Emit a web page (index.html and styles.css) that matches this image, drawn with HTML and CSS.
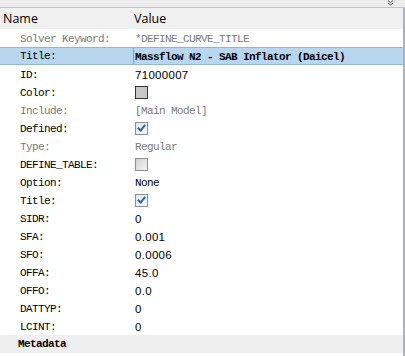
FILE: index.html
```html
<!DOCTYPE html>
<html lang="en">
<head>
    <meta charset="UTF-8">
    <title>Properties</title>
    <link rel="stylesheet" href="styles.css">
</head>
<body>
    <div class="panel">
        <div class="topbar">
            <svg class="collapse" width="7" height="6" viewBox="0 0 7 6">
                <path d="M1 0.5 L3.5 2.5 L6 0.5 M1 3 L3.5 5 L6 3" fill="none" stroke="#555" stroke-width="1"/>
            </svg>
        </div>
        <div class="grid">
            <div class="header">
                <div class="col-name">Name</div>
                <div class="col-value">Value</div>
            </div>
            <div class="row muted"><div class="name">Solver Keyword:</div><div class="value">*DEFINE_CURVE_TITLE</div></div>
            <div class="row selected"><div class="name">Title:</div><div class="value">Massflow N2 - SAB Inflator (Daicel)</div></div>
            <div class="row"><div class="name">ID:</div><div class="value num">71000007</div></div>
            <div class="row"><div class="name">Color:</div><div class="value"><span class="swatch"></span></div></div>
            <div class="row muted"><div class="name">Include:</div><div class="value">[Main Model]</div></div>
            <div class="row"><div class="name">Defined:</div><div class="value"><span class="check on"></span></div></div>
            <div class="row muted"><div class="name">Type:</div><div class="value">Regular</div></div>
            <div class="row"><div class="name">DEFINE_TABLE:</div><div class="value"><span class="check"></span></div></div>
            <div class="row"><div class="name">Option:</div><div class="value">None</div></div>
            <div class="row"><div class="name">Title:</div><div class="value"><span class="check on"></span></div></div>
            <div class="row"><div class="name">SIDR:</div><div class="value num">0</div></div>
            <div class="row"><div class="name">SFA:</div><div class="value num">0.001</div></div>
            <div class="row"><div class="name">SFO:</div><div class="value num">0.0006</div></div>
            <div class="row"><div class="name">OFFA:</div><div class="value num">45.0</div></div>
            <div class="row"><div class="name">OFFO:</div><div class="value num">0.0</div></div>
            <div class="row"><div class="name">DATTYP:</div><div class="value num">0</div></div>
            <div class="row"><div class="name">LCINT:</div><div class="value num">0</div></div>
            <div class="group">Metadata</div>
        </div>
    </div>
</body>
</html>
```

FILE: styles.css
```css
body {
    margin: 0;
    background: #f7f7f7;
    font-family: "Liberation Mono", monospace;
    font-size: 11px;
    letter-spacing: -0.6px;
    color: #000;
}

.panel {
    width: 405px;
    height: 356px;
    overflow: hidden;
    display: flex;
    flex-direction: column;
}

.topbar {
    height: 7px;
    background: #ececec;
    border-bottom: 1px solid #c4c4c4;
    display: flex;
    justify-content: flex-end;
    padding-right: 11px;
}

.collapse {
    display: block;
}

.grid {
    flex: 1;
    border-right: 2px solid #aab3bd;
    background: #fff;
}

.header {
    display: flex;
    height: 21px;
    align-items: center;
    background: #f0f0f0;
    font-family: "Open Sans", "Liberation Sans", sans-serif;
    font-size: 12.5px;
    letter-spacing: 0;
}

.col-name {
    width: 131px;
    padding-left: 3px;
}

.row {
    display: flex;
    height: 18px;
    align-items: center;
    padding-top: 1px;
    box-sizing: border-box;
}

.name {
    width: 114px;
    padding-left: 20px;
    flex-shrink: 0;
}

.value {
    padding-left: 1px;
    display: flex;
    align-items: center;
}

.num {
    font-family: "Liberation Sans", sans-serif;
    letter-spacing: 0.3px;
    font-size: 11.5px;
}

.muted {
    color: #7a7a7a;
}

.selected {
    background: #b8d7ee;
    border-top: 1px solid #8db6d8;
    border-bottom: 1px solid #8db6d8;
    padding-top: 0;
}

.selected .name {
    border-right: 1px solid #7fa3c4;
    height: 16px;
    line-height: 17px;
    width: 113px;
}

.selected .value {
    font-weight: bold;
    padding-top: 1px;
}

.swatch {
    width: 11px;
    height: 11px;
    background: #c8c8c8;
    border: 1px solid #333;
}

.check {
    width: 11px;
    height: 11px;
    border: 1px solid #8e8f8f;
    background: linear-gradient(135deg, #d0d0d0, #f4f4f4);
    position: relative;
}

.check.on {
    background: linear-gradient(135deg, #dfe7ef, #f4f7fa);
}

.check.on::after {
    content: "";
    position: absolute;
    left: 3px;
    top: 0px;
    width: 3px;
    height: 6px;
    border: solid #2a6a9c;
    border-width: 0 2px 2px 0;
    transform: rotate(40deg);
}

.group {
    height: 18px;
    line-height: 19px;
    background: #efefef;
    padding-left: 18px;
    font-weight: bold;
}
```
